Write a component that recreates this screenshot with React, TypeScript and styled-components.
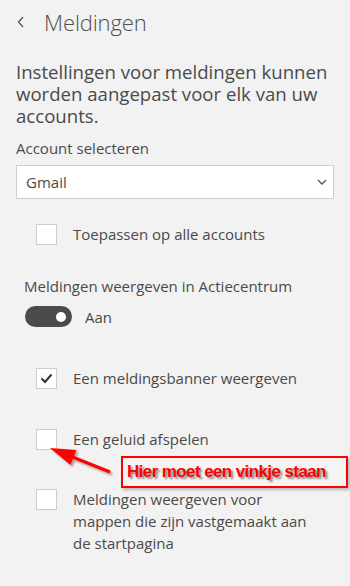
import styled, { createGlobalStyle } from 'styled-components';

const Global = createGlobalStyle`
  html, body {
    margin: 0;
    padding: 0;
    background: #f2f2f2;
  }
  body {
    font-family: 'Open Sans', 'Noto Sans', sans-serif;
    color: #4a4a4a;
  }
`;

const Page = styled.div`
  position: relative;
  width: 350px;
  height: 586px;
  padding: 0 16px;
  box-sizing: border-box;
  overflow: hidden;
  background: #f2f2f2;
`;

const Header = styled.div`
  height: 44px;
  display: flex;
  align-items: center;
`;

const Back = styled.svg`
  width: 8px;
  height: 12px;
  margin-left: 1px;
  margin-right: 19px;
`;

const Title = styled.h1`
  margin: 0;
  font-size: 22px;
  font-weight: 300;
  color: #505050;
  letter-spacing: -0.1px;
`;

const Text = styled.p<{ $top: number; $indent?: number; $big?: boolean }>`
  margin: ${(p) => p.$top}px 0 0 ${(p) => p.$indent ?? 0}px;
  font-size: ${(p) => (p.$big ? 18.6 : 15)}px;
  line-height: 22px;
`;

const Select = styled.div`
  margin-top: 6px;
  height: 34px;
  box-sizing: border-box;
  border: 1px solid #cfcfcf;
  background: #fff;
  display: flex;
  align-items: center;
  justify-content: space-between;
  padding: 0 6px 0 9px;
  font-size: 15px;
`;

const Row = styled.div<{ $top: number }>`
  margin-top: ${(p) => p.$top}px;
  padding-left: 20px;
  display: flex;
  align-items: flex-start;
`;

const Box = styled.div`
  flex: none;
  width: 21px;
  height: 21px;
  box-sizing: border-box;
  border: 1px solid #cccccc;
  background: #fff;
  display: flex;
  align-items: center;
  justify-content: center;
`;

const Label = styled.span`
  margin-left: 16px;
  margin-top: -1px;
  font-size: 15px;
  line-height: 22px;
  max-width: 240px;
`;

const ToggleRow = styled.div`
  margin-top: 9px;
  margin-left: 9px;
  display: flex;
  align-items: center;
`;

const Track = styled.div`
  width: 47px;
  height: 21px;
  border-radius: 11px;
  background: #4b4b4b;
  display: flex;
  align-items: center;
  justify-content: flex-end;
  padding-right: 6px;
  box-sizing: border-box;
`;

const Knob = styled.div`
  width: 10px;
  height: 10px;
  border-radius: 50%;
  background: #fff;
`;

const ToggleText = styled.span`
  margin-left: 13px;
  font-size: 15px;
`;

const Callout = styled.div`
  position: absolute;
  left: 121px;
  top: 456px;
  width: 227px;
  height: 32px;
  box-sizing: border-box;
  border: 2px solid #ff0000;
  background: #f4f4f4;
  box-shadow: 2px 2px 3px rgba(0, 0, 0, 0.25);
  display: flex;
  align-items: center;
  padding-left: 4px;
  font-family: 'Liberation Sans', Arial, sans-serif;
  font-weight: bold;
  font-size: 17px;
  letter-spacing: -0.6px;
  color: #ff0000;
  text-shadow: 2px 2px 2px rgba(0, 0, 0, 0.45);
`;

const Arrow = styled.svg`
  position: absolute;
  left: 0;
  top: 0;
  width: 350px;
  height: 586px;
  pointer-events: none;
`;

const Check = ({ checked }: { checked?: boolean }) => (
  <Box>
    {checked && (
      <svg width="13" height="11" viewBox="0 0 13 11">
        <polyline points="1.5,5.5 5,9 11.5,1.5" fill="none" stroke="#333" strokeWidth="2" />
      </svg>
    )}
  </Box>
);

export default function App() {
  return (
    <Page>
      <Global />
      <Header>
        <Back viewBox="0 0 8 12">
          <polyline points="6,1 1.5,6 6,11" fill="none" stroke="#555" strokeWidth="1.3" />
        </Back>
        <Title>Meldingen</Title>
      </Header>

      <Text $top={17} $big>
        Instellingen voor meldingen kunnen worden aangepast voor elk van uw accounts.
      </Text>
      <Text $top={10}>Account selecteren</Text>
      <Select>
        <span>Gmail</span>
        <svg width="10" height="6" viewBox="0 0 10 6">
          <polyline points="1,1 5,5 9,1" fill="none" stroke="#555" strokeWidth="1.3" />
        </svg>
      </Select>

      <Row $top={25}>
        <Check />
        <Label>Toepassen op alle accounts</Label>
      </Row>

      <Text $top={30} $indent={8}>Meldingen weergeven in Actiecentrum</Text>
      <ToggleRow>
        <Track>
          <Knob />
        </Track>
        <ToggleText>Aan</ToggleText>
      </ToggleRow>

      <Row $top={41}>
        <Check checked />
        <Label>Een meldingsbanner weergeven</Label>
      </Row>
      <Row $top={40}>
        <Check />
        <Label>Een geluid afspelen</Label>
      </Row>
      <Row $top={39}>
        <Check />
        <Label>Meldingen weergeven voor mappen die zijn vastgemaakt aan de startpagina</Label>
      </Row>

      <Arrow viewBox="0 0 350 586">
        <defs>
          <filter id="sh" x="-20%" y="-20%" width="140%" height="140%">
            <feDropShadow dx="2" dy="2" stdDeviation="1.2" floodColor="#000" floodOpacity="0.35" />
          </filter>
        </defs>
        <g filter="url(#sh)">
          <line x1="110" y1="472" x2="70" y2="456" stroke="#ff0000" strokeWidth="3" />
          <polygon points="50,448 76.5,450 70.5,465" fill="#ff0000" />
        </g>
      </Arrow>
      <Callout>Hier moet een vinkje staan</Callout>
    </Page>
  );
}
